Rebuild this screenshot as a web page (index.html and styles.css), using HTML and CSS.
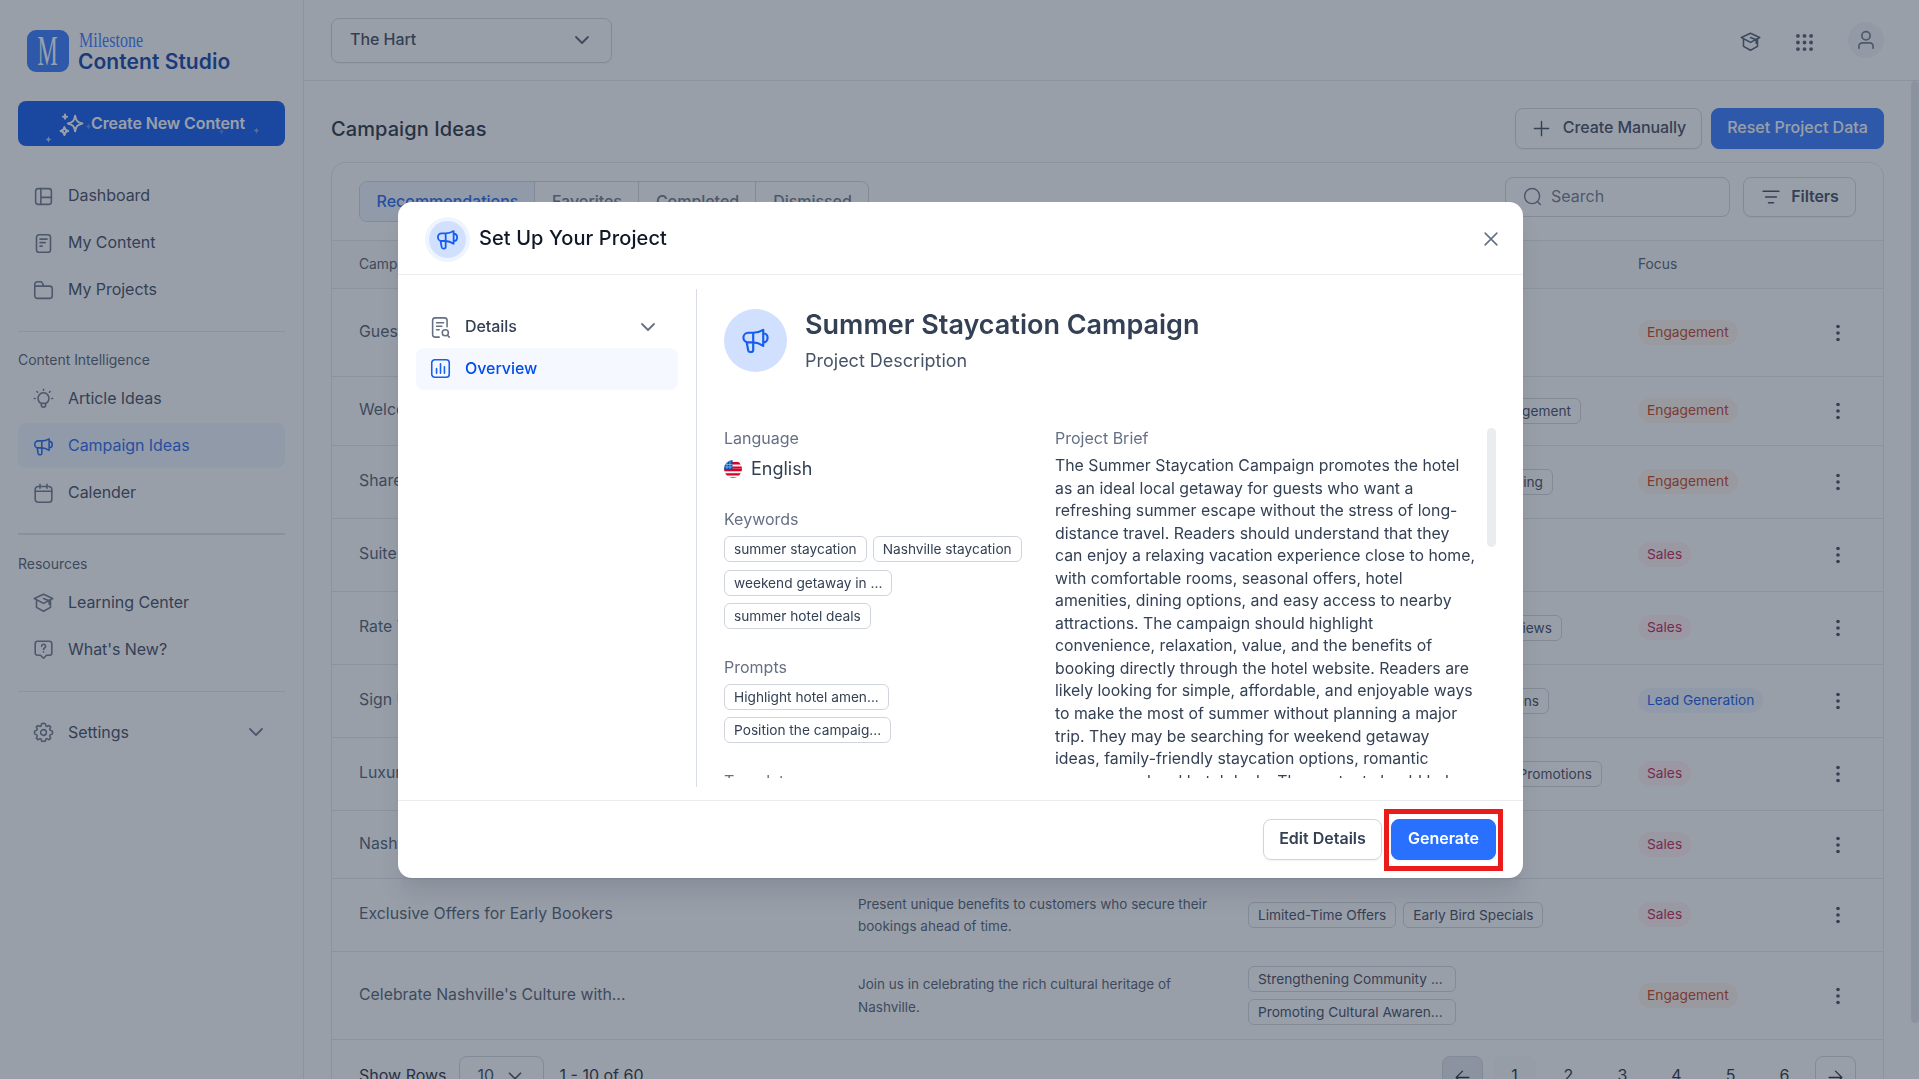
FILE: index.html
```html
<!DOCTYPE html>
<html lang="en">
<head>
<meta charset="utf-8">
<title>Milestone Content Studio</title>
<link rel="stylesheet" href="styles.css">
</head>
<body>
<svg class="sprite" aria-hidden="true">
  <symbol id="i-dashboard" viewBox="0 0 24 24"><rect x="3" y="3" width="18" height="18" rx="3"/><path d="M9 3v18M9 13h12"/></symbol>
  <symbol id="i-file" viewBox="0 0 24 24"><rect x="4" y="2" width="16" height="20" rx="3"/><path d="M8 7h8M8 11h6M8 15h2.5"/></symbol>
  <symbol id="i-folder" viewBox="0 0 24 24"><path d="M2 7V5a3 3 0 0 1 3-3h3.6a2 2 0 0 1 1.8 1.1L12.5 7M2 7h17a3 3 0 0 1 3 3v8a3 3 0 0 1-3 3H5a3 3 0 0 1-3-3z"/></symbol>
  <symbol id="i-bulb" viewBox="0 0 24 24"><path d="M9.5 17.5v2a2.5 2.5 0 0 0 5 0v-2M12 1.5v1M4.5 4l.8.8M19.5 4l-.8.8M1.5 12h1M21.5 12h1M9.5 17.6a6.3 6.3 0 1 1 5 0z"/></symbol>
  <symbol id="i-mega" viewBox="0 0 24 24"><path d="M10.1 5.6H6a4 4 0 0 0 0 8h4.1c2.8 0 6 1.300 8.300 2.800V3.200C16.100 4.600 12.900 5.600 10.100 5.600zM10.100 5.600v14a1.900 1.900 0 0 1-1.900 1.900h-.5a1.900 1.900 0 0 1-1.800-1.500L4.700 13.400M18.400 6c2 0 3.600 1.600 3.600 3.800s-1.600 3.800-3.600 3.800"/></symbol>
  <symbol id="i-cal" viewBox="0 0 24 24"><rect x="2.500" y="4" width="19" height="18" rx="3.500"/><path d="M2.500 9.500h19M8 1.500v4.500M16 1.500v4.500"/></symbol>
  <symbol id="i-cap" viewBox="0 0 24 24"><path d="M1.500 7.500 12 2.500l10.500 5L12 13zM4 9v8.500l8 4.500 8-4.500V9M12 7.500l6.500 2.500v4"/></symbol>
  <symbol id="i-help" viewBox="0 0 24 24"><path d="M5 2.500h14a2.500 2.500 0 0 1 2.500 2.500v11a2.500 2.500 0 0 1-2.500 2.500h-3.500L12 22l-3.500-3.500H5A2.500 2.500 0 0 1 2.500 16V5A2.500 2.500 0 0 1 5 2.500zM9.800 8.300a2.300 2.300 0 1 1 3.400 2c-.8.500-1.200.8-1.200 1.700M12 14.600v.2"/></symbol>
  <symbol id="i-gear" viewBox="0 0 24 24"><circle cx="12" cy="12" r="3.300"/><path d="M12.0 1.5 14.1 2.0 14.8 4.5 16.0 5.1 18.5 4.0 20.2 5.6 19.1 8.0 19.6 9.300 22.200 10.500V13.500L19.600 14.700 19.100 16.000 20.200 18.400 18.400 20.200 16.000 19.000 14.800 19.500 14.000 22.000H10.000L9.200 19.500 8.000 19.000 5.600 20.200 3.800 18.400 4.900 16.000 4.400 14.700 1.800 13.500V10.500L4.400 9.300 4.900 8.000 3.800 5.600 5.500 4.000 8.000 5.100 9.200 4.500 9.900 2.000z"/></symbol>
  <symbol id="i-chev" viewBox="0 0 24 24"><path d="m6 9 6 6 6-6"/></symbol>
  <symbol id="i-filter" viewBox="0 0 24 24"><path d="M2.500 5h19M5.500 12h13M9 19h6"/></symbol>
  <symbol id="i-search" viewBox="0 0 24 24"><circle cx="11.500" cy="11.500" r="9.500"/><path d="m18.500 18.500 3.500 3.500"/></symbol>
  <symbol id="i-plus" viewBox="0 0 24 24"><path d="M12 3v18M3 12h18"/></symbol>
  <symbol id="i-x" viewBox="0 0 24 24"><path d="m2 2 20 20M22 2 2 22"/></symbol>
  <symbol id="i-user" viewBox="0 0 24 24"><circle cx="12" cy="7" r="5"/><path d="M3.500 22v-2.500a4 4 0 0 1 4-4h9a4 4 0 0 1 4 4V22"/></symbol>
  <symbol id="i-dots" viewBox="0 0 24 24"><g class="solid"><circle cx="12" cy="4.200" r="2.200"/><circle cx="12" cy="12" r="2.200"/><circle cx="12" cy="19.800" r="2.200"/></g></symbol>
  <symbol id="i-grid" viewBox="0 0 24 24"><g class="solid"><circle cx="4.500" cy="4.500" r="2.200"/><circle cx="12" cy="4.500" r="2.200"/><circle cx="19.500" cy="4.500" r="2.200"/><circle cx="4.500" cy="12" r="2.200"/><circle cx="12" cy="12" r="2.200"/><circle cx="19.500" cy="12" r="2.200"/><circle cx="4.500" cy="19.500" r="2.200"/><circle cx="12" cy="19.500" r="2.200"/><circle cx="19.500" cy="19.500" r="2.200"/></g></symbol>
  <symbol id="i-left" viewBox="0 0 24 24"><path d="M21 12H3M12 3l-9 9 9 9"/></symbol>
  <symbol id="i-right" viewBox="0 0 24 24"><path d="M3 12h18M12 3l9 9-9 9"/></symbol>
  <symbol id="i-details" viewBox="0 0 24 24"><path d="M10.500 23H6a3 3 0 0 1-3-3V4a3 3 0 0 1 3-3h10.500a3 3 0 0 1 3 3v7M7.500 6.500h8M7.500 10.500h6M7.500 14.500h3M20.500 21.500l1.500 1.500"/><circle cx="17.500" cy="18" r="3.500"/></symbol>
  <symbol id="i-chart" viewBox="0 0 24 24"><rect x="2" y="2" width="20" height="20" rx="3.500"/><path d="M7.500 12v5.500M12 6.500v11M16.500 10v7.500"/></symbol>
  <symbol id="i-stars" viewBox="0 0 24 24"><path d="M15.500 3.500c.8 5 2.200 6.400 7 7.500-4.800 1.100-6.200 2.500-7 7.500-.8-5-2.200-6.400-7-7.500 4.800-1.100 6.200-2.500 7-7.500zM5.200 14.500c.4 2.500 1.200 3.300 3.700 3.800-2.500.5-3.300 1.300-3.700 3.800-.4-2.500-1.200-3.300-3.700-3.800 2.500-.5 3.300-1.300 3.700-3.800zM5.800 2.500v4M3.800 4.500h4"/></symbol>
  <symbol id="i-spark" viewBox="0 0 24 24"><path class="solid" d="M12 0c1.200 8 4 10.800 12 12-8 1.200-10.800 4-12 12-1.200-8-4-10.800-12-12 8-1.200 10.800-4 12-12z"/></symbol>
</svg>

<div class="app">
  <aside class="sidebar">
    <div class="brand">
      <div class="logo"><span>M</span></div>
      <div class="brand-text"><span class="script">Milestone</span><span class="studio">Content Studio</span></div>
    </div>
    <button class="create"><svg class="ic stars"><use href="#i-stars"/></svg><span>Create New Content</span>
      <svg class="spark s1"><use href="#i-spark"/></svg><svg class="spark s2"><use href="#i-spark"/></svg><svg class="spark s3"><use href="#i-spark"/></svg><svg class="spark s4"><use href="#i-spark"/></svg>
    </button>
    <nav class="nav nav-main">
      <a><svg class="ic"><use href="#i-dashboard"/></svg>Dashboard</a>
      <a><svg class="ic"><use href="#i-file"/></svg>My Content</a>
      <a><svg class="ic"><use href="#i-folder"/></svg>My Projects</a>
    </nav>
    <hr class="rule">
    <h2 class="section">Content Intelligence</h2>
    <nav class="nav nav-ci">
      <a><svg class="ic"><use href="#i-bulb"/></svg>Article Ideas</a>
      <a class="on"><svg class="ic"><use href="#i-mega"/></svg>Campaign Ideas</a>
      <a><svg class="ic"><use href="#i-cal"/></svg>Calender</a>
    </nav>
    <hr class="rule thick">
    <h2 class="section">Resources</h2>
    <nav class="nav nav-res">
      <a><svg class="ic"><use href="#i-cap"/></svg>Learning Center</a>
      <a><svg class="ic"><use href="#i-help"/></svg>What's New?</a>
    </nav>
    <hr class="rule">
    <nav class="nav nav-set">
      <a><svg class="ic"><use href="#i-gear"/></svg>Settings<svg class="ic chev"><use href="#i-chev"/></svg></a>
    </nav>
  </aside>

  <div class="main">
    <header class="topbar">
      <div class="select">The Hart<svg class="ic"><use href="#i-chev"/></svg></div>
      <div class="tools">
        <svg class="ic cap"><use href="#i-cap"/></svg>
        <svg class="ic grid"><use href="#i-grid"/></svg>
        <div class="avatar"><svg class="ic"><use href="#i-user"/></svg></div>
      </div>
    </header>
    <div class="scroller">
      <div class="content">
        <div class="page-head">
          <h1>Campaign Ideas</h1>
          <button class="btn manual"><svg class="ic"><use href="#i-plus"/></svg>Create Manually</button>
          <button class="btn reset">Reset Project Data</button>
        </div>
        <section class="card">
          <div class="toolbar">
            <div class="tabs"><span class="on">Recommendations</span><span>Favorites</span><span>Completed</span><span>Dismissed</span></div>
            <div class="search"><svg class="ic"><use href="#i-search"/></svg>Search</div>
            <button class="btn filters"><svg class="ic"><use href="#i-filter"/></svg>Filters</button>
          </div>
          <div class="row thead"><span>Campaign Ideas</span><span>Description</span><span>Tags</span><span>Focus</span><span></span></div>
          <div class="row h88"><span class="name">Guest Stories</span><span></span><span></span><span><b class="pill eng">Engagement</b></span><svg class="dots"><use href="#i-dots"/></svg></div>
          <div class="row h69"><span class="name">Welcome Gifts</span><span></span><div class="tags end" style="width:333px"><i class="tag">Customer Engagement</i></div><span><b class="pill eng">Engagement</b></span><svg class="dots"><use href="#i-dots"/></svg></div>
          <div class="row"><span class="name">Share Your Stay</span><span></span><div class="tags end" style="width:305px"><i class="tag">Social Sharing</i></div><span><b class="pill eng">Engagement</b></span><svg class="dots"><use href="#i-dots"/></svg></div>
          <div class="row"><span class="name">Suite Upgrades</span><span></span><span></span><span><b class="pill sale">Sales</b></span><svg class="dots"><use href="#i-dots"/></svg></div>
          <div class="row"><span class="name">Rate Your Stay</span><span></span><div class="tags end" style="width:314px"><i class="tag">Guest Reviews</i></div><span><b class="pill sale">Sales</b></span><svg class="dots"><use href="#i-dots"/></svg></div>
          <div class="row"><span class="name">Sign Up and Save</span><span></span><div class="tags end" style="width:301px"><i class="tag">Promotions</i></div><span><b class="pill lead">Lead Generation</b></span><svg class="dots"><use href="#i-dots"/></svg></div>
          <div class="row"><span class="name">Luxury Escapes</span><span></span><div class="tags end" style="width:354px"><i class="tag">Seasonal Promotions</i></div><span><b class="pill sale">Sales</b></span><svg class="dots"><use href="#i-dots"/></svg></div>
          <div class="row h68"><span class="name">Nashville Nights</span><span></span><span></span><span><b class="pill sale">Sales</b></span><svg class="dots"><use href="#i-dots"/></svg></div>
          <div class="row"><span class="name">Exclusive Offers for Early Bookers</span><span class="desc">Present unique benefits to customers who secure their bookings ahead of time.</span><div class="tags"><i class="tag">Limited-Time Offers</i><i class="tag">Early Bird Specials</i></div><span><b class="pill sale">Sales</b></span><svg class="dots"><use href="#i-dots"/></svg></div>
          <div class="row h88"><span class="name">Celebrate Nashville's Culture with...</span><span class="desc">Join us in celebrating the rich cultural heritage of Nashville.</span><div class="tags stack"><i class="tag">Strengthening Community ...</i><i class="tag">Promoting Cultural Awaren...</i></div><span><b class="pill eng">Engagement</b></span><svg class="dots"><use href="#i-dots"/></svg></div>
          <div class="pager">
            <span>Show Rows</span>
            <div class="rows">10<svg class="ic"><use href="#i-chev"/></svg></div>
            <span class="range">1 - 10 of 60</span>
            <div class="pages">
              <span class="arrow off"><svg class="ic"><use href="#i-left"/></svg></span>
              <span class="pg on">1</span><span class="pg">2</span><span class="pg">3</span><span class="pg">4</span><span class="pg">5</span><span class="pg">6</span>
              <span class="arrow"><svg class="ic"><use href="#i-right"/></svg></span>
            </div>
          </div>
        </section>
      </div>
      <div class="thumb"></div>
    </div>
  </div>
</div>

<div class="overlay">
  <div class="modal">
    <header class="m-head">
      <div class="badge"><svg class="ic"><use href="#i-mega"/></svg></div>
      <h2>Set Up Your Project</h2>
      <svg class="ic close"><use href="#i-x"/></svg>
    </header>
    <div class="m-body">
      <nav class="m-nav">
        <a><svg class="ic doc"><use href="#i-details"/></svg>Details<svg class="ic chev"><use href="#i-chev"/></svg></a>
        <a class="on"><svg class="ic"><use href="#i-chart"/></svg>Overview</a>
      </nav>
      <div class="m-content">
        <div class="hero">
          <div class="disc"><svg class="ic"><use href="#i-mega"/></svg></div>
          <div><h3>Summer Staycation Campaign</h3><p>Project Description</p></div>
        </div>
        <div class="pane">
          <div class="facts">
            <h4>Language</h4>
            <div class="lang">
              <svg class="flag" viewBox="0 0 18 18"><clipPath id="c"><circle cx="9" cy="9" r="9"/></clipPath><g clip-path="url(#c)"><rect width="18" height="18" fill="#f5f5f5"/><path fill="#d80027" d="M8 2h10v2.500H8zM8 6.500h10v2.300H8zM0 9h18v2.300H0zM0 13.300h18V15.500H0zM3 17.300h12V18H3z"/><rect width="8.500" height="9" fill="#0052b4"/><path stroke="#9fc3ea" stroke-width=".7" d="M0 4.500h8.500M3 0v9M6 0v9M0 7h8.500"/></g></svg>
              English
            </div>
            <h4>Keywords</h4>
            <div class="chips"><i class="tag">summer staycation</i><i class="tag">Nashville staycation</i><i class="tag cut">weekend getaway in ...</i><i class="tag">summer hotel deals</i></div>
            <h4>Prompts</h4>
            <div class="chips col"><i class="tag">Highlight hotel amen...</i><i class="tag">Position the campaig...</i></div>
            <h4>Template</h4>
          </div>
          <div class="brief">
            <h4>Project Brief</h4>
            <p>The Summer Staycation Campaign promotes the hotel<br>as an ideal local getaway for guests who want a<br>refreshing summer escape without the stress of long-<br>distance travel. Readers should understand that they<br>can enjoy a relaxing vacation experience close to home,<br>with comfortable rooms, seasonal offers, hotel<br>amenities, dining options, and easy access to nearby<br>attractions. The campaign should highlight<br>convenience, relaxation, value, and the benefits of<br>booking directly through the hotel website. Readers are<br>likely looking for simple, affordable, and enjoyable ways<br>to make the most of summer without planning a major<br>trip. They may be searching for weekend getaway<br>ideas, family-friendly staycation options, romantic<br>escapes, or local hotel deals. The content should help</p>
          </div>
          <div class="m-thumb"></div>
        </div>
      </div>
    </div>
    <footer class="m-foot">
      <button class="btn edit">Edit Details</button>
      <div class="mark"><button class="btn gen">Generate</button></div>
    </footer>
  </div>
</div>
</body>
</html>
```
FILE: styles.css
```css
* { box-sizing: border-box; margin: 0; padding: 0; }
body { height: 1079px; overflow: hidden; background: #fff; color: #344054; font: 400 16px/24px Inter, "Liberation Sans", sans-serif; }
.sprite { position: absolute; width: 0; height: 0; }
.ic { fill: none; stroke: currentColor; stroke-width: 1.8; stroke-linecap: round; stroke-linejoin: round; flex: none; }
.solid { fill: currentColor; stroke: none; }
button, i, b { font: inherit; }

.app { display: flex; width: 100%; height: 1079px; overflow: hidden; }
.sidebar { width: 304px; flex: none; border-right: 1px solid #e4e7ec; padding: 30px 18px 0; }
.brand { display: flex; gap: 10px; height: 42px; padding-left: 9px; }
.logo { width: 42px; height: 42px; border-radius: 9px; background: #2970ff; color: #fff; display: flex; align-items: center; justify-content: center; font: 42px/42px "Liberation Serif", serif; }
.logo span { transform: scaleX(.54); }
.brand-text { display: flex; flex-direction: column; }
.script { font: 20px/20px "Liberation Serif", serif; color: #2970ff; width: 63px; white-space: nowrap; transform: scaleX(.8); transform-origin: left; }
.studio { font-size: 21px; font-weight: 600; line-height: 24px; color: #00359e; white-space: nowrap; margin-left: -1px; letter-spacing: .05px; }
.create { position: relative; width: 267px; height: 45px; margin-top: 29px; border: 0; border-radius: 8px; background: #004eeb; color: #fff; font-weight: 600; letter-spacing: -.12px; display: flex; align-items: center; gap: 7px; padding: 0 0 1px 41px; white-space: nowrap; }
.stars { width: 25px; height: 25px; stroke-width: 1.9; position: relative; top: 1px; }
.spark { position: absolute; width: 7px; height: 7px; opacity: .7; }
.s1 { left: 27px; top: 35px; } .s2 { left: 67px; top: 22px; opacity: .3; } .s3 { left: 200px; top: 27px; opacity: .25; } .s4 { left: 235px; top: 26px; opacity: .45; }
.nav { display: flex; flex-direction: column; gap: 2.200px; letter-spacing: -.05px; }
.nav a { display: flex; align-items: center; height: 45px; padding: 0 20px 1px 15px; border-radius: 8px; gap: 14px; }
.nav .ic { width: 21px; height: 21px; color: #667085; position: relative; top: 1px; }
.nav a.on { background: #eff4ff; color: #155eef; }
.nav a.on .ic { color: #155eef; }
.nav .chev { width: 24px; height: 24px; margin-left: auto; top: 0; margin-right: -3px; }
.nav-main { margin-top: 27px; }
.rule { border: 0; height: 1px; background: #e4e7ec; }
.rule.thick { height: 2px; background: #dfe2e8; }
.nav-main + .rule { margin-top: 18.600px; }
.section { font-size: 14px; font-weight: 400; line-height: 20px; color: #475467; letter-spacing: -.02px; }
.rule + .section { margin-top: 18px; }
.rule.thick + .section { margin-top: 19px; }
.nav-ci { margin-top: 6px; }
.nav-ci + .rule { margin-top: 17.400px; }
.nav-res { margin-top: 6px; }
.nav-res + .rule { margin-top: 18.600px; }
.nav-set { margin-top: 18.400px; }

.main { flex: 1; display: flex; flex-direction: column; min-width: 0; }
.topbar { height: 81px; flex: none; border-bottom: 1px solid #e4e7ec; display: flex; justify-content: space-between; padding: 18px 35px 0 27px; }
.select { width: 281px; height: 45px; border: 1px solid #d0d5dd; border-radius: 8px; display: flex; align-items: center; justify-content: space-between; padding: 0 17px 3px 18px; font-weight: 500; letter-spacing: -.05px; box-shadow: 0 1px 2px rgba(16,24,40,.05); }
.select .ic { width: 24px; height: 24px; color: #475467; position: relative; top: 1px; }
.tools { display: flex; align-items: center; height: 45px; color: #475467; }
.tools .cap { width: 21px; height: 21px; margin-right: 33px; position: relative; top: 1px; }
.tools .grid { width: 21px; height: 21px; margin-right: 33px; position: relative; top: 2px; }
.avatar { width: 36px; height: 36px; border-radius: 50%; background: #f2f4f7; display: flex; align-items: center; justify-content: center; position: relative; top: -1px; }
.avatar .ic { width: 20px; height: 20px; color: #667085; stroke-width: 2; }
.scroller { flex: 1; display: flex; min-height: 0; overflow: hidden; }
.content { flex: 1; padding: 27px 27px 0; min-width: 0; }
.thumb { width: 8px; height: 942px; border-radius: 4px; background: #e4e7ec; }
.btn { display: flex; align-items: center; justify-content: center; border: 1px solid #d0d5dd; border-radius: 8px; background: none; color: #344054; white-space: nowrap; box-shadow: 0 1px 2px rgba(16,24,40,.05); }
.page-head { display: flex; height: 41px; align-items: center; margin-bottom: 13px; }
h1 { font-size: 20px; font-weight: 500; color: #182230; flex: 1; letter-spacing: .08px; }
.manual { width: 187px; height: 41px; gap: 12px; margin-right: 9px; font-weight: 500; padding-bottom: 3px; letter-spacing: -.08px; padding-left: 1px; }
.manual .ic { width: 19px; height: 19px; position: relative; top: 1px; }
.reset { width: 173px; height: 41px; background: #2970ff; border-color: #2970ff; color: #fff; font-weight: 500; padding-bottom: 3px; }
.card { border: 1px solid #e4e7ec; border-radius: 14px 14px 0 0; width: 1553px; height: 960px; }
.toolbar { height: 77px; display: flex; padding: 14px 27px 0; }
.tabs { display: flex; height: 41px; margin-top: 4px; border: 1px solid #d0d5dd; border-radius: 8px; overflow: hidden; color: #667085; font-weight: 500; letter-spacing: -.03px; }
.tabs span { width: 104px; padding-left: 1px; text-align: center; line-height: 38px; border-right: 1px solid #d0d5dd; }
.tabs .on { width: 175px; background: #eff4ff; color: #155eef; }
.tabs span:nth-child(3) { width: 117px; }
.tabs span:last-child { width: 112px; border: 0; }
.search { width: 225px; height: 40px; margin-left: auto; border: 1px solid #d0d5dd; border-radius: 8px; display: flex; align-items: center; gap: 9px; padding: 0 17px 3px; color: #667085; }
.search .ic { width: 19px; height: 19px; position: relative; top: 1px; }
.filters { width: 113px; height: 40px; margin-left: 13px; gap: 10px; font-weight: 600; padding-bottom: 3px; padding-left: 1px; letter-spacing: -.1px; }
.filters .ic { width: 20px; height: 20px; position: relative; top: 1px; }
.row { height: 73px; display: grid; grid-template-columns: 499px 390px 390px 190px 24px; align-items: center; padding-left: 27px; border-top: 1px solid #e4e7ec; color: #475467; }
.thead { height: 48px; background: #f9fafb; font-size: 13.8px; padding-bottom: 1px; }
.h88 { height: 88px; } .h69 { height: 69px; } .h68 { height: 68px; }
.name { color: #475467; padding-bottom: 2px; font-size: 15.850px; }
.desc { font-size: 13.5px; line-height: 22.500px; width: 365px; }
.tags { display: flex; gap: 7px; }
.tags.end { justify-content: flex-end; }
.tags.stack { flex-direction: column; width: 208px; gap: 7px; }
.tag { display: block; height: 26px; border: 1px solid #d0d5dd; border-radius: 6px; padding: 0 9px; font-size: 13.7px; line-height: 24px; color: #344054; white-space: nowrap; }
.pill { display: inline-block; height: 25px; border-radius: 13px; padding: 0 9px; font-size: 13.750px; line-height: 25px; vertical-align: middle; margin-bottom: 1px; }
.eng { background: #fef4ec; color: #c4320a; }
.sale { background: #fff1f3; color: #c01048; }
.lead { background: #eff4ff; color: #004eeb; }
.dots { width: 20px; height: 20px; color: #344054; }
.pager { border-top: 1px solid #e4e7ec; display: flex; align-items: flex-start; padding: 16px 27px 0; color: #182230; line-height: 38px; }
.rows { width: 85px; height: 41px; border: 1px solid #d0d5dd; border-radius: 8px; margin-left: 12px; padding-left: 18px; display: flex; gap: 10px; line-height: 36px; color: #344054; }
.rows .ic { width: 22px; height: 22px; margin-top: 8px; }
.range { margin-left: 16px; }
.pages { margin-left: auto; display: flex; }
.arrow { width: 41px; height: 41px; border: 1px solid #d0d5dd; border-radius: 8px; display: flex; justify-content: center; padding-top: 12px; }
.arrow.off { background: #e4e7ec; margin-right: 10px; }
.arrow .ic { width: 17px; height: 17px; }
.arrow:last-child { margin-left: -2px; }
.pg { width: 43px; height: 41px; border-radius: 8px; text-align: center; margin-right: 11px; }
.pg.on { background: #f9fafb; }

.overlay { position: fixed; inset: 0; background: rgba(52,64,84,.5); display: flex; align-items: flex-start; padding: 202px 0 0 398px; }
.modal { width: 1125px; height: 676px; border-radius: 14px; background: #fff; display: flex; flex-direction: column; box-shadow: 0 20px 24px -4px rgba(16,24,40,.1), 0 8px 8px -4px rgba(16,24,40,.04); }
.m-head { height: 73px; border-bottom: 1px solid #eaecf0; display: flex; align-items: center; padding: 2px 25px 0 27px; }
.badge { width: 45px; height: 45px; border-radius: 50%; background: #d1e0ff; border: 4px solid #eff4ff; display: flex; align-items: center; justify-content: center; color: #155eef; }
.badge .ic { width: 23px; height: 23px; stroke-width: 1.900; }
.m-head h2 { font-size: 20px; font-weight: 500; color: #101828; margin-left: 9px; padding-bottom: 2px; flex: 1; letter-spacing: .1px; }
.close { width: 14px; height: 14px; color: #667085; stroke-width: 2.800; }
.m-body { height: 526px; display: flex; padding: 14px 0 13px; border-bottom: 1px solid #eaecf0; }
.m-nav { width: 299px; border-right: 1px solid #d9dde4; padding: 17px 18px 0; }
.m-nav a { display: flex; align-items: center; width: 262px; height: 42px; padding: 0 18px 3px 14px; border-radius: 8px; gap: 14px; font-weight: 500; color: #344054; letter-spacing: -.05px; }
.m-nav .ic { width: 21px; height: 21px; color: #667085; position: relative; top: 2px; }
.m-nav .chev { width: 24px; height: 24px; margin-left: auto; top: 1px; }
.m-nav a.on { background: #f5f8ff; color: #004eeb; }
.m-nav a.on .ic { color: #155eef; top: 1px; }
.m-content { flex: 1; padding: 20px 27px 0; }
.hero { display: flex; gap: 18px; height: 119px; }
.disc { width: 63px; height: 63px; border-radius: 50%; background: #d1e0ff; color: #155eef; display: flex; align-items: center; justify-content: center; }
.disc .ic { width: 29px; height: 29px; }
.hero h3 { font-size: 27px; font-weight: 600; line-height: 36px; margin-top: -2px; white-space: nowrap; }
.hero p { font-size: 18px; line-height: 28px; margin-top: 4px; color: #475467; }
.pane { display: flex; height: 350px; overflow: hidden; }
.facts { width: 331px; flex: none; }
.pane h4 { font-size: 16px; font-weight: 400; line-height: 22px; color: #667085; }
.facts h4:first-child, .brief h4 { margin-top: -1px; }
.lang { display: flex; align-items: center; gap: 9px; font-size: 18px; line-height: 28px; margin: 6px 0 25px; }
.flag { width: 18px; height: 18px; }
.chips { display: flex; flex-wrap: wrap; gap: 7.600px 6px; margin: 6px 0 26.500px; width: 310px; }
.chips.col { flex-direction: column; align-items: flex-start; }
.cut { margin-right: 60px; }
.brief { width: 432px; flex: none; }
.brief p { font-size: 15.850px; line-height: 22.540px; margin-top: 6px; white-space: nowrap; }
.m-thumb { width: 9px; height: 119px; border-radius: 5px; background: #eaecf0; }
.m-foot { flex: 1; display: flex; justify-content: flex-end; align-items: flex-start; padding: 8px 20px 0 0; }
.edit { width: 119px; height: 41px; margin: 10px 2px 0 0; font-weight: 600; padding-bottom: 3px; }
.mark { border: 5px solid #e91b1b; width: 119px; height: 62px; padding: 5px 0 0 2px; }
.gen { width: 105px; height: 41px; background: #2970ff; border-color: #2970ff; color: #fff; font-weight: 600; padding-bottom: 3px; }
```
